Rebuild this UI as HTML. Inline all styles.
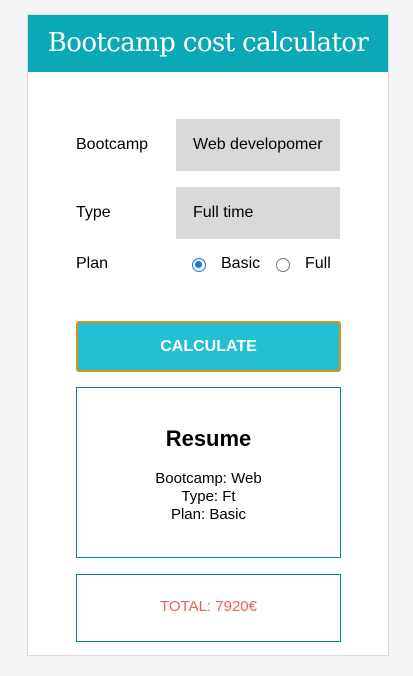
<!DOCTYPE html>
<html><head><style>
*{box-sizing:border-box;margin:0;padding:0}
body{width:413px;height:676px;background:#f4f4f4;font-family:"Liberation Sans",Arial,sans-serif;position:relative;overflow:hidden}
.card{position:absolute;left:27px;top:14px;width:362px;height:642px;background:#fff;border:1px solid #ddd}
.hdr{position:absolute;left:0;top:0;width:360px;height:57px;background:#0ba9b5;color:#fff;font-family:"DejaVu Serif","Liberation Serif",serif;font-size:26px;text-align:center;line-height:56px;letter-spacing:-0.6px}
.lbl{position:absolute;left:48px;font-size:16px;color:#000}
.inp{position:absolute;left:148px;width:164px;height:52px;background:#d9d9d9;font-size:16px;padding-left:17px;line-height:52px}
.r{position:absolute;width:14px;height:14px;border-radius:50%;border:1px solid #777;background:#fff}
.r.on{border:1.5px solid #1a73e8}
.r.on::after{content:"";position:absolute;left:2px;top:2px;width:7px;height:7px;border-radius:50%;background:#1a73e8}
.btn{position:absolute;left:48px;top:306px;width:265px;height:51px;background:#25bfd4;border:2px solid #e0900e;border-radius:3px;color:#fff;font-weight:bold;font-size:16px;text-align:center;line-height:47px}
.res{position:absolute;left:48px;top:372px;width:265px;height:171px;border:1px solid #137d86;text-align:center}
.tot{position:absolute;left:48px;top:559px;width:265px;height:68px;border:1px solid #137d86;text-align:center;color:#f25c5c;font-size:15px;line-height:64px}
</style></head><body>
<div class="card">
<div class="hdr">Bootcamp cost calculator</div>
<div class="lbl" style="top:121px">Bootcamp</div>
<div class="inp" style="top:104px">Web developomer</div>
<div class="lbl" style="top:189px">Type</div>
<div class="inp" style="top:172px">Full time</div>
<div class="lbl" style="top:240px">Plan</div>
<div class="r on" style="left:164px;top:243px"></div>
<div class="lbl" style="left:193px;top:240px">Basic</div>
<div class="r" style="left:248px;top:243px"></div>
<div class="lbl" style="left:277px;top:240px">Full</div>
<div class="btn">CALCULATE</div>
<div class="res">
<div style="font-size:22px;font-weight:bold;margin-top:38px">Resume</div>
<div style="font-size:15px;line-height:18px;margin-top:18px">Bootcamp: Web<br>Type: Ft<br>Plan: Basic</div>
</div>
<div class="tot">TOTAL: 7920€</div>
</div>
</body></html>
